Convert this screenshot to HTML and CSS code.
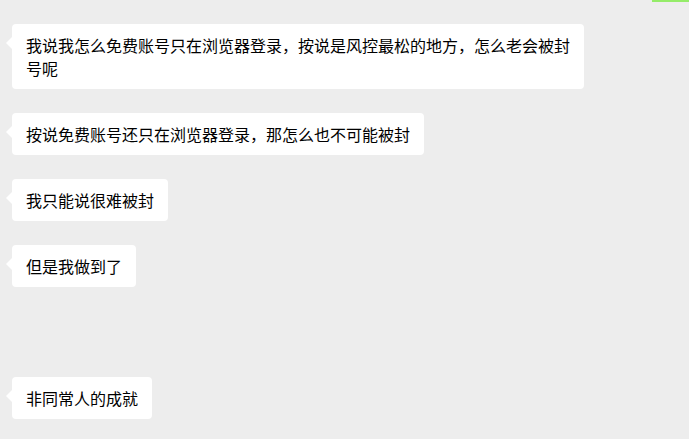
FILE: index.html
```html
<!DOCTYPE html>
<html lang="zh-CN">
<head>
<meta charset="utf-8">
<title>chat</title>
<link rel="stylesheet" href="styles.css">
</head>
<body>
<div class="chat">
  <div class="peer-edge"></div>
  <div class="msgs">
    <div class="bubble">我说我怎么免费账号只在浏览器登录，按说是风控最松的地方，怎么老会被封号呢</div>
    <div class="bubble">按说免费账号还只在浏览器登录，那怎么也不可能被封</div>
    <div class="bubble">我只能说很难被封</div>
    <div class="bubble">但是我做到了</div>
    <div class="bubble later">非同常人的成就</div>
  </div>
</div>
</body>
</html>
```
FILE: styles.css
```css
html, body {
  margin: 0;
  padding: 0;
  background: #ededed;
}
body {
  font-family: "Noto Sans CJK SC", "Noto Sans", sans-serif;
  color: #000000;
  width: 689px;
  height: 439px;
  overflow: hidden;
}
.chat {
  display: flex;
  flex-direction: column;
}
.peer-edge {
  align-self: flex-end;
  width: 37px;
  height: 2px;
  background: #95ec69;
}
.msgs {
  display: flex;
  flex-direction: column;
  align-items: flex-start;
  gap: 23.5px;
  padding: 22px 0 0 12px;
}
.bubble {
  position: relative;
  box-sizing: border-box;
  max-width: 572px;
  padding: 10px 13.5px 10px 14px;
  background: #ffffff;
  border-radius: 4px;
  font-size: 16px;
  line-height: 22.5px;
}
.bubble::before {
  content: "";
  position: absolute;
  left: -6px;
  top: 13px;
  width: 0;
  height: 0;
  border-top: 6px solid transparent;
  border-bottom: 6px solid transparent;
  border-right: 6px solid #ffffff;
}
.later {
  margin-top: 66px;
}
```
